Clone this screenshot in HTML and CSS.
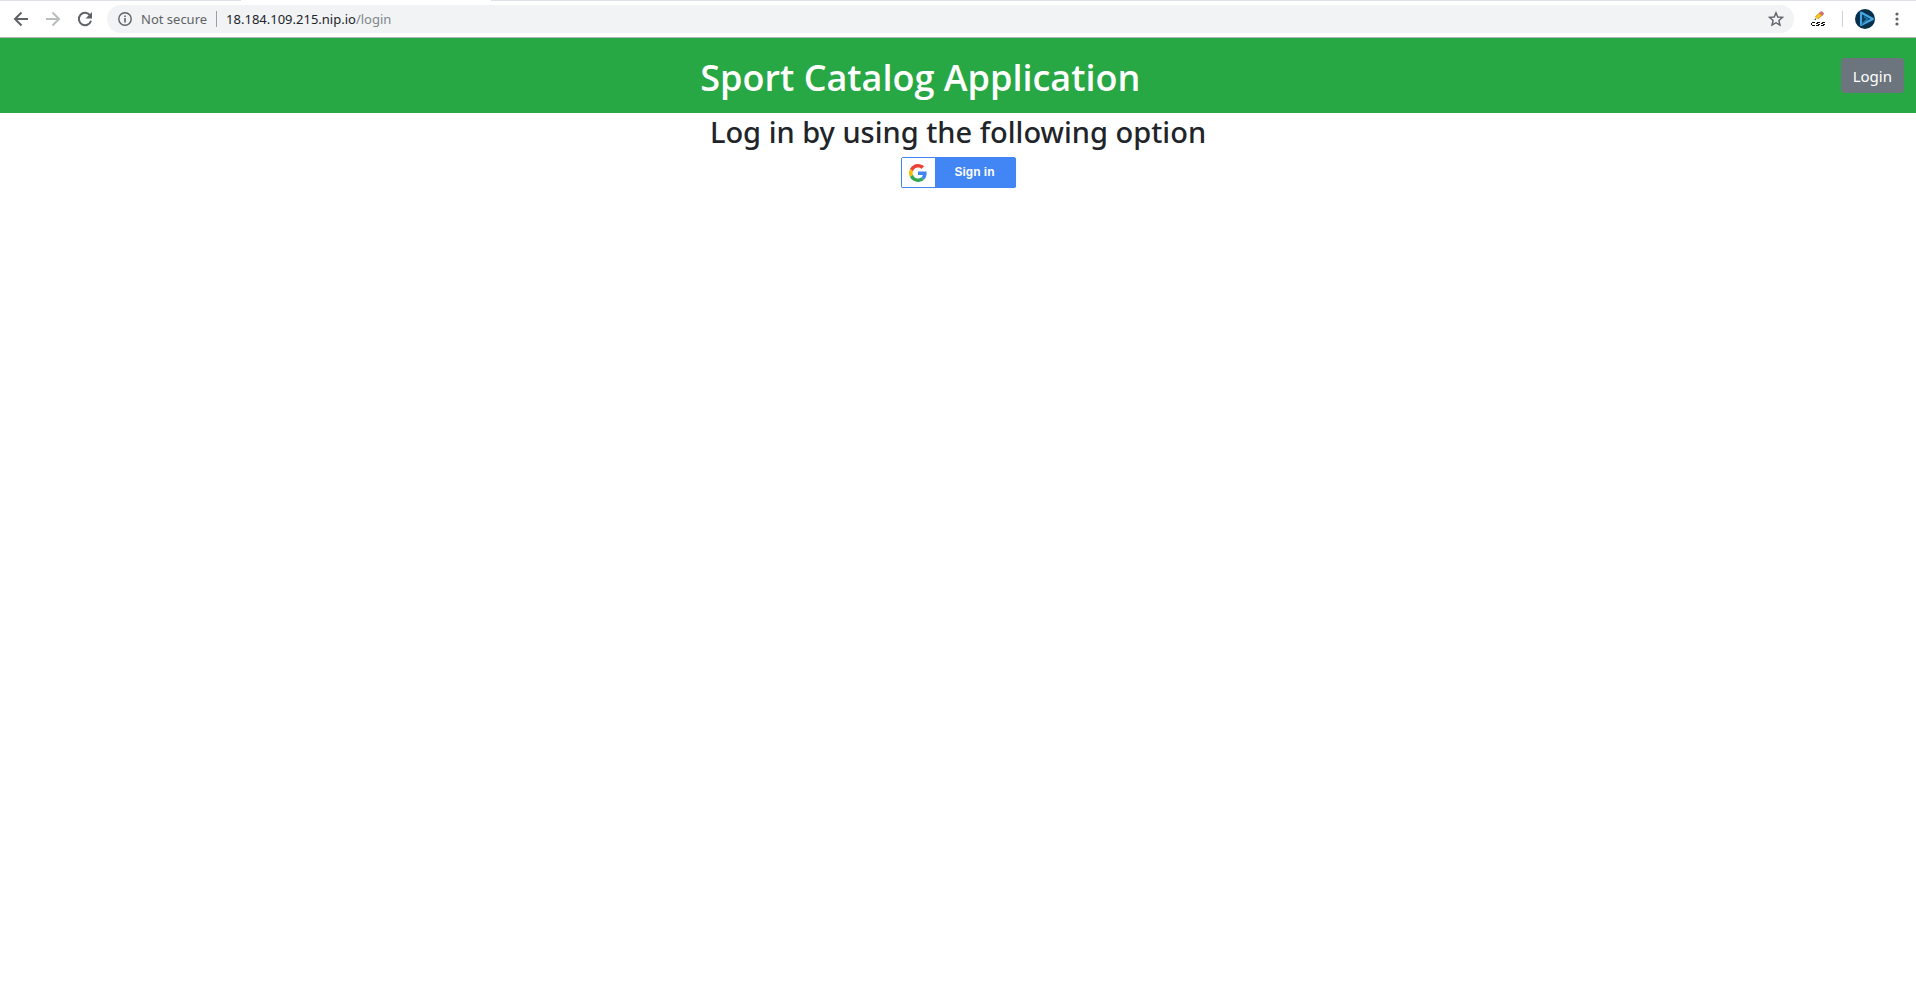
FILE: index.html
```html
<!DOCTYPE html>
<html lang="en">
<head>
<meta charset="utf-8">
<title>Sport Catalog Application</title>
<link rel="stylesheet" href="styles.css">
</head>
<body>
<div class="toolbar">
  <div class="tab-edge"><span class="tab-edge-left"></span><span class="tab-edge-right"></span></div>
  <div class="toolbar-row">
    <div class="nav-buttons">
      <button class="icon-button" type="button" aria-label="Back"><svg width="16" height="16" viewBox="0 0 16 16" fill="none" stroke="#5f6368" stroke-width="2"><path d="M15 8H2.500M8.500 1.500 2 8l6.500 6.500"/></svg></button>
      <button class="icon-button" type="button" aria-label="Forward" disabled><svg width="16" height="16" viewBox="0 0 16 16" fill="none" stroke="#babcbe" stroke-width="2"><path d="M1 8h12.500M7.500 1.500 14 8l-6.500 6.500"/></svg></button>
      <button class="icon-button" type="button" aria-label="Reload"><svg width="16" height="16" viewBox="0 0 16 16"><path d="M13.200 4.500A6.200 6.200 0 1 0 14 9.800" fill="none" stroke="#5f6368" stroke-width="2"/><path d="M15 1v6.500H8.500z" fill="#5f6368"/></svg></button>
    </div>
    <div class="omnibox">
      <svg width="14" height="14" viewBox="0 0 14 14"><circle cx="7" cy="7" r="6.200" fill="none" stroke="#5f6368" stroke-width="1.400"/><path d="M6.200 6h1.600v4.500H6.200zM6.200 3.400h1.600V5H6.200z" fill="#5f6368"/></svg>
      <span class="security">Not secure</span>
      <span class="divider"></span>
      <span class="url">18.184.109.215.nip.io<span class="url-path">/login</span></span>
      <button class="icon-button" type="button" aria-label="Bookmark this page"><svg width="16" height="16" viewBox="0 0 16 16" fill="none" stroke="#5f6368" stroke-width="1.400"><path d="m8 1.700 1.800 4.300 4.700.4-3.600 3.100 1.100 4.600L8 11.700l-4 2.400 1.100-4.600L1.500 6.400l4.700-.4z"/></svg></button>
    </div>
    <div class="extensions">
      <button class="icon-button extension" type="button" aria-label="CSS editor"><svg width="16" height="16" viewBox="0 0 16 16"><path d="M5.500 5.500 9.500 2l2.500 2.500L8 8z" fill="#fbc712" stroke="#b8740f" stroke-width=".6"/><path d="M9.500 2 11 .8h1.200l1.200 1.400v1L12 4.500z" fill="#e8707c" stroke="#a33a45" stroke-width=".5"/><path d="M5.500 5.500 4.600 8.700 8 8z" fill="#f0d9a0"/><path d="m5 7.200-.5 1.700 1.700-.4z" fill="#111"/><path fill="#111" shape-rendering="crispEdges" d="M2 11h3v1H2zM1 12h1v2H1zM2 14h3v1H2zM7 11h3v1H7zM6 12h2v1H6zM8 13h2v1H8zM6 14h3v1H6zM12 11h3v1h-3zM11 12h2v1h-2zM13 13h2v1h-2zM11 14h3v1h-3z"/></svg></button>
      <span class="divider divider-light"></span>
      <button class="icon-button profile" type="button" aria-label="Profile"><svg width="20" height="20" viewBox="0 0 20 20"><circle cx="10" cy="10" r="10" fill="#06304d"/><path d="M6 3.500v12.500l12-6z" fill="#0b3c5e" stroke="#48a7df" stroke-width="2" stroke-linejoin="round"/><path d="m6.500 15.500 6-5.500-3.500-2.500" fill="none" stroke="#1f7ab0" stroke-width="1.500"/></svg></button>
      <button class="icon-button" type="button" aria-label="Menu"><svg width="16" height="16" viewBox="0 0 16 16" fill="#5f6368"><circle cx="8" cy="3" r="1.600"/><circle cx="8" cy="8" r="1.600"/><circle cx="8" cy="13" r="1.600"/></svg></button>
    </div>
  </div>
</div>
<header class="site-header">
  <h1 class="site-title">Sport Catalog Application</h1>
  <button class="login" type="button">Login</button>
</header>
<main class="content">
  <h2 class="prompt">Log in by using the following option</h2>
  <button class="google" type="button">
    <span class="google-logo"><svg width="18" height="18" viewBox="0 0 48 48"><path fill="#EA4335" d="M24 9.500c3.540 0 6.710 1.220 9.210 3.600l6.850-6.850C35.900 2.380 30.470 0 24 0 14.620 0 6.510 5.380 2.560 13.220l7.980 6.190C12.430 13.720 17.740 9.500 24 9.500z"/><path fill="#4285F4" d="M46.980 24.550c0-1.570-.15-3.090-.38-4.550H24v9.020h12.940c-.58 2.960-2.260 5.480-4.780 7.180l7.730 6c4.510-4.180 7.090-10.360 7.090-17.650z"/><path fill="#FBBC05" d="M10.530 28.590c-.48-1.450-.76-2.990-.76-4.590s.27-3.140.76-4.590l-7.980-6.190C.92 16.460 0 20.120 0 24c0 3.880.92 7.540 2.560 10.780l7.970-6.190z"/><path fill="#34A853" d="M24 48c6.480 0 11.930-2.130 15.890-5.810l-7.730-6c-2.150 1.450-4.920 2.300-8.160 2.300-6.260 0-11.570-4.220-13.470-9.910l-7.980 6.190C6.510 42.620 14.620 48 24 48z"/></svg></span>
    <span class="google-label">Sign in</span>
  </button>
</main>
</body>
</html>
```
FILE: styles.css
```css
* { box-sizing: border-box; }

body {
  margin: 0;
  background: #fff;
  color: #212529;
  font-family: "Noto Sans", "Open Sans", sans-serif;
}

button {
  margin: 0;
  padding: 0;
  border: 0;
  background: none;
  font: inherit;
}

svg { display: block; }

.toolbar {
  background: #fff;
  border-bottom: 1px solid #b3b5b8;
}

.tab-edge {
  display: flex;
  justify-content: space-between;
  gap: 250px;
  height: 1px;
}

.tab-edge-left {
  width: 241px;
  background: #dee1e6;
}

.tab-edge-right {
  flex: 1;
  background: #dee1e6;
}

.toolbar-row {
  display: flex;
  align-items: center;
  padding: 4px 11px 4px 13px;
}

.nav-buttons {
  display: flex;
  gap: 16px;
  margin-right: 14px;
}

.omnibox {
  flex: 1;
  display: flex;
  align-items: center;
  height: 28px;
  padding: 0 10px 0 11px;
  border-radius: 14px;
  background: #f1f3f4;
  font-size: 13px;
}

.security {
  margin: 0 9px 0 9px;
  color: #5f6368;
}

.divider {
  width: 1px;
  height: 16px;
  margin-right: 9px;
  background: #9aa0a6;
}

.divider-light {
  margin: 0;
  background: #cfd1d3;
}

.url { flex: 1; }

.url-path { color: #80868b; }

.extensions {
  display: flex;
  align-items: center;
  margin-left: 16px;
}

.extension { margin-right: 16px; }

.profile { margin: 0 14px 0 12px; }

.site-header {
  display: flex;
  align-items: center;
  height: 75px;
  padding-right: 12px;
  background: #28a745;
}

.site-title {
  flex: 1;
  margin: 0;
  padding-top: 4px;
  color: #fff;
  font-family: "Open Sans", "Noto Sans", sans-serif;
  font-size: 36px;
  font-weight: 600;
  line-height: 48px;
  text-align: center;
}

.login {
  height: 35px;
  padding: 0 12px;
  border-radius: 4px;
  background: #6c757d;
  color: #fff;
  font-size: 15px;
}

.content {
  display: flex;
  flex-direction: column;
  align-items: center;
}

.prompt {
  margin: 0 0 6px;
  font-size: 29px;
  font-weight: 500;
  line-height: 38px;
  text-align: center;
}

.google {
  display: flex;
  width: 115px;
  height: 31px;
  border: 1px solid #4285f4;
  border-radius: 2px;
  background: #4285f4;
  box-shadow: 0 1px 1px #ccc;
  color: #fff;
  font-family: "Liberation Sans", Arial, sans-serif;
  font-size: 12px;
  font-weight: 700;
}

.google-logo {
  display: flex;
  align-items: center;
  justify-content: center;
  width: 33px;
  height: 29px;
  background: #fff;
}

.google-label {
  flex: 1;
  line-height: 28px;
  text-align: center;
}
```
